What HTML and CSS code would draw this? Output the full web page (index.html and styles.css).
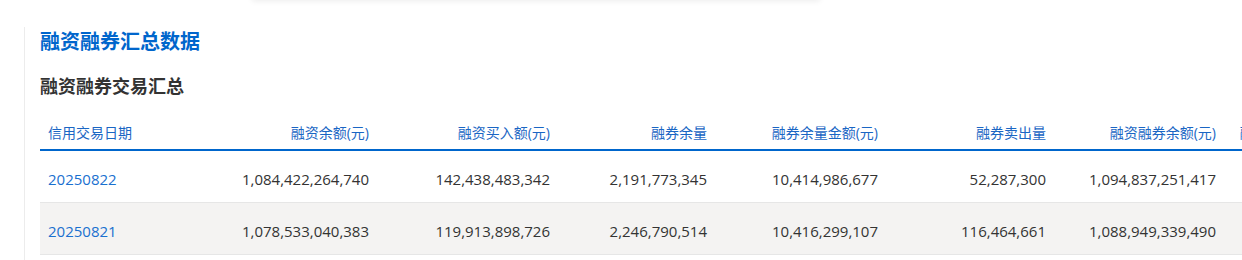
FILE: index.html
```html
<!DOCTYPE html>
<html lang="zh-CN">
<head>
<meta charset="utf-8">
<title>融资融券汇总数据</title>
<link rel="stylesheet" href="styles.css">
</head>
<body>
<div class="top-card"></div>
<section class="panel">
  <h1 class="title">融资融券汇总数据</h1>
  <h2 class="subtitle">融资融券交易汇总</h2>
  <div class="table-wrap">
    <table class="data">
      <colgroup>
        <col class="c1"><col class="c2"><col class="c3"><col class="c4"><col class="c5"><col class="c6"><col class="c7"><col class="c8">
      </colgroup>
      <thead>
        <tr>
          <th class="left">信用交易日期</th>
          <th>融资余额(元)</th>
          <th>融资买入额(元)</th>
          <th>融券余量</th>
          <th>融券余量金额(元)</th>
          <th>融券卖出量</th>
          <th>融资融券余额(元)</th>
          <th>融资融券余额差值(元)</th>
        </tr>
      </thead>
      <tbody>
        <tr>
          <td class="left"><a class="date" href="#">20250822</a></td>
          <td>1,084,422,264,740</td>
          <td>142,438,483,342</td>
          <td>2,191,773,345</td>
          <td>10,414,986,677</td>
          <td>52,287,300</td>
          <td>1,094,837,251,417</td>
          <td>1,074,007,278,063</td>
        </tr>
        <tr class="alt">
          <td class="left"><a class="date" href="#">20250821</a></td>
          <td>1,078,533,040,383</td>
          <td>119,913,898,726</td>
          <td>2,246,790,514</td>
          <td>10,416,299,107</td>
          <td>116,464,661</td>
          <td>1,088,949,339,490</td>
          <td>1,068,116,741,276</td>
        </tr>
      </tbody>
    </table>
  </div>
</section>
</body>
</html>
```

FILE: styles.css
```css
html, body {
  margin: 0;
  padding: 0;
  background: #ffffff;
  overflow: hidden;
}

body {
  width: 1242px;
  height: 260px;
  position: relative;
  font-family: "Open Sans", "Noto Sans CJK SC", sans-serif;
  color: #333333;
}

.top-card {
  position: absolute;
  top: -40px;
  left: 252px;
  width: 568px;
  height: 40px;
  background: #ffffff;
  box-shadow: 0 1px 6px rgba(0, 0, 0, 0.08);
}

.panel {
  margin: 27px 0 0 24px;
  padding-left: 15px;
  border-left: 1px solid #ececec;
  height: 233px;
}

.title {
  margin: 0;
  font-family: "Noto Sans CJK SC", sans-serif;
  font-size: 20px;
  line-height: 28px;
  font-weight: 700;
  color: #0066cc;
}

.subtitle {
  margin: 17px 0 0;
  font-family: "Noto Sans CJK SC", sans-serif;
  font-size: 18px;
  line-height: 26px;
  font-weight: 700;
  color: #333333;
}

.table-wrap {
  margin-top: 16px;
  width: 1203px;
  overflow: hidden;
}

.data {
  border-collapse: collapse;
  table-layout: fixed;
  width: 1362px;
}

.c1 { width: 150px; }
.c2 { width: 187px; }
.c3 { width: 181px; }
.c4 { width: 157px; }
.c5 { width: 171px; }
.c6 { width: 168px; }
.c7 { width: 170px; }
.c8 { width: 178px; }

.data th {
  height: 36px;
  padding: 0 8px;
  font-size: 14px;
  font-weight: 400;
  color: #1a66c4;
  text-align: right;
  white-space: nowrap;
  border-bottom: 2px solid #0066cc;
  box-sizing: border-box;
}

.data th:last-child {
  padding-right: 28px;
}

.data td {
  height: 52px;
  padding: 6px 8px 0;
  font-size: 15px;
  color: #333333;
  text-align: right;
  white-space: nowrap;
  border-bottom: 1px solid #e6e6e6;
  box-sizing: border-box;
}

.data .left {
  text-align: left;
}

.data tr.alt td {
  background: #f4f3f2;
}

.date {
  color: #1a70cf;
  text-decoration: none;
}
```
